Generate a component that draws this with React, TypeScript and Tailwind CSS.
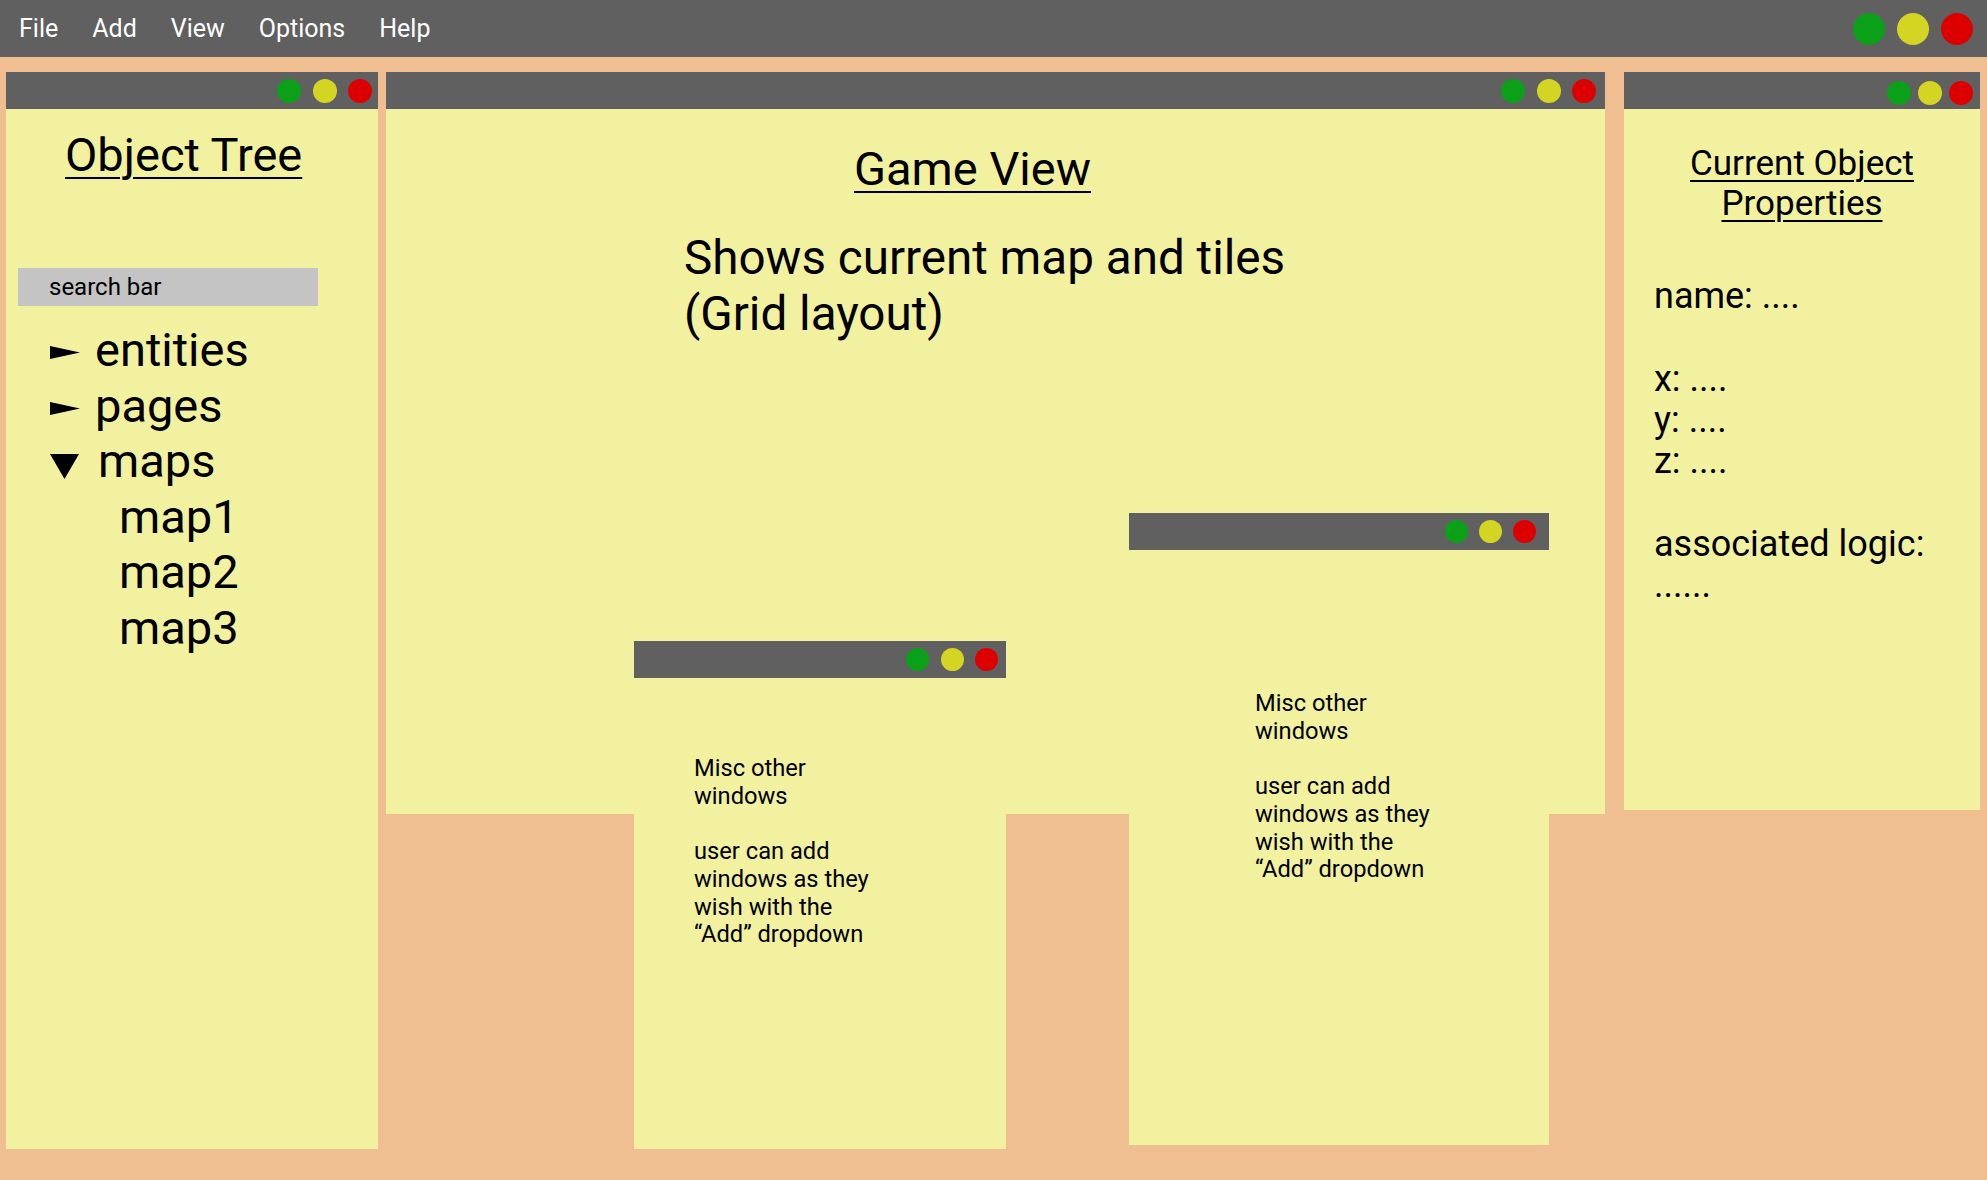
import React from 'react';

const Lights: React.FC<{ size?: string; gap?: string; right?: string; nudge?: string }> = ({
  size = 'w-[24px] h-[24px]',
  gap = 'gap-[11.5px]',
  right = 'pr-[6px]',
  nudge = '',
}) => (
  <div className={`flex items-center ${gap} ${right} ${nudge}`}>
    <span className={`${size} rounded-full bg-[#0aa017]`} />
    <span className={`${size} rounded-full bg-[#d4d522]`} />
    <span className={`${size} rounded-full bg-[#dd0000]`} />
  </div>
);

const TitleBar: React.FC<{ right?: string; gap?: string; size?: string; nudge?: string }> = (props) => (
  <div className="h-[37px] bg-[#606060] flex items-center justify-end shrink-0">
    <Lights {...props} />
  </div>
);

const RightArrow = () => (
  <svg width="30" height="13" viewBox="0 0 30 13" className="mt-[6px]" aria-label="collapsed">
    <polygon points="0,0 30,6.5 0,13" fill="#000" />
  </svg>
);

const DownArrow = () => (
  <svg width="29" height="25" viewBox="0 0 29 25" className="mt-[11px]" aria-label="expanded">
    <polygon points="0,0 29,0 14.5,25" fill="#000" />
  </svg>
);

const MiscText = () => (
  <div className="text-[23.7px] leading-[27.7px] text-black">
    <div>Misc other</div>
    <div>windows</div>
    <div className="h-[27.7px]" />
    <div>user can add</div>
    <div>windows as they</div>
    <div>wish with the</div>
    <div>“Add” dropdown</div>
  </div>
);

const App: React.FC = () => {
  return (
    <div className="w-[1987px] h-[1180px] bg-[#efbe91] overflow-hidden flex flex-col font-['Roboto','Liberation_Sans',sans-serif] text-black">
      {/* Menu bar */}
      <header className="h-[57px] bg-[#606060] flex items-center justify-between shrink-0">
        <nav className="flex items-center gap-[34px] pl-[19px] text-[25px] text-white">
          <span>File</span>
          <span>Add</span>
          <span>View</span>
          <span>Options</span>
          <span>Help</span>
        </nav>
        <Lights size="w-[32px] h-[32px]" gap="gap-[12px]" right="pr-[14px]" />
      </header>

      <main className="relative flex items-start pt-[15px] pl-[6px]">
        {/* Object tree */}
        <section className="w-[372px] h-[1077px] bg-[#f1f1a0] flex flex-col">
          <TitleBar right="pr-[6px]" />
          <div className="pt-[18px] pl-[12px]">
            <h1 className="pl-[47px] text-[47px] leading-[56px] underline underline-offset-[6px] decoration-[2px]">
              Object Tree
            </h1>
            <div className="mt-[85px] w-[300px] h-[38px] bg-[#c4c4c4] flex items-center pl-[31px] text-[24px]">
              search bar
            </div>
            <ul className="mt-[16px] text-[47px] leading-[55.5px]">
              <li className="flex items-start pl-[32px] gap-[15px]">
                <span className="h-[55.5px] flex items-center"><RightArrow /></span>
                <span>entities</span>
              </li>
              <li className="flex items-start pl-[32px] gap-[15px]">
                <span className="h-[55.5px] flex items-center"><RightArrow /></span>
                <span>pages</span>
              </li>
              <li className="flex items-start pl-[32px] gap-[19px]">
                <span className="h-[55.5px] flex items-center"><DownArrow /></span>
                <span>maps</span>
              </li>
              <li className="pl-[101px]">map1</li>
              <li className="pl-[101px]">map2</li>
              <li className="pl-[101px]">map3</li>
            </ul>
          </div>
        </section>

        {/* Game view */}
        <section className="ml-[8px] w-[1219px] h-[742px] bg-[#f1f1a0] flex flex-col">
          <TitleBar right="pr-[9px]" />
          <div className="pt-[32px]">
            <h2 className="pl-[468px] text-[47px] leading-[56px] underline underline-offset-[6px] decoration-[2px]">
              Game View
            </h2>
            <p className="mt-[33px] pl-[298px] text-[47.6px] leading-[56px]">
              Shows current map and tiles
              <br />
              (Grid layout)
            </p>
          </div>
        </section>

        {/* Current object properties */}
        <section className="ml-[19px] w-[356px] h-[738px] bg-[#f1f1a0] flex flex-col">
          <TitleBar right="pr-[7px]" gap="gap-[7px]" nudge="mt-[5px]" />
          <div className="pt-[35px]">
            <h2 className="text-center text-[35px] leading-[40px] underline underline-offset-[5px] decoration-[2px]">
              Current Object
              <br />
              Properties
            </h2>
            <div className="mt-[52px] pl-[30px] text-[36px] leading-[41.3px]">
              <div>name: ....</div>
              <div className="h-[41.3px]" />
              <div>x: ....</div>
              <div>y: ....</div>
              <div>z: ....</div>
              <div className="h-[41.3px]" />
              <div>associated logic:</div>
              <div>......</div>
            </div>
          </div>
        </section>

        {/* Floating misc windows */}
        <div className="absolute left-[634px] top-[584px] w-[372px] h-[508px] bg-[#f1f1a0] flex flex-col">
          <TitleBar right="pr-[8px]" size="w-[23px] h-[23px]" />
          <div className="pt-[77px] pl-[60px]">
            <MiscText />
          </div>
        </div>

        <div className="absolute left-[1129px] top-[456px] w-[420px] h-[632px] bg-[#f1f1a0] flex flex-col">
          <TitleBar right="pr-[13px]" gap="gap-[11px]" size="w-[23px] h-[23px]" />
          <div className="pt-[140px] pl-[126px]">
            <MiscText />
          </div>
        </div>
      </main>
    </div>
  );
};

export default App;
